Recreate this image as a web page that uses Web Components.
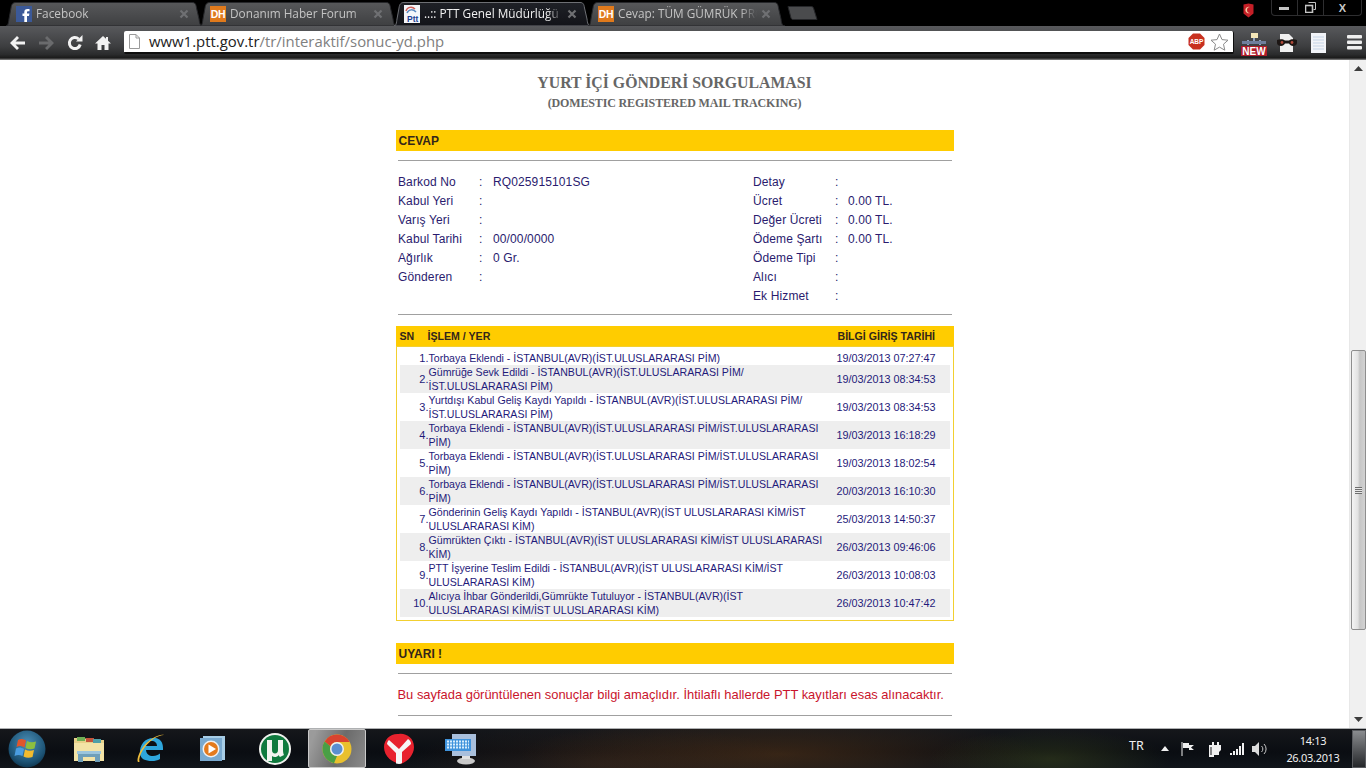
<!DOCTYPE html>
<html lang="tr">
<head>
<meta charset="utf-8">
<title>PTT</title>
<style>
html, body { margin: 0; padding: 0; height: 100%; overflow: hidden; background: #000; }
</style>
</head>
<body>
<browser-desktop>
  <tab-strip slot="top">
    <browser-tab style="margin-left:6px">
      <svg slot="icon" width="16" height="16" viewBox="0 0 16 16"><rect width="16" height="16" fill="#3b5998"/><path d="M11 16V10h2l.4-2.500H11V6.500c0-.8.3-1.200 1.200-1.200h1.300V3h-2C9.400 3 8.300 4.200 8.300 6.200V7.500H6.500V10h1.800v6z" fill="#fff"/></svg>
      Facebook
    </browser-tab>
    <browser-tab>
      <fav-dh slot="icon"></fav-dh>
      Donanım Haber Forum
    </browser-tab>
    <browser-tab active>
      <svg slot="icon" width="16" height="18" viewBox="0 0 16 18"><rect width="16" height="18" fill="#f4f6fa"/><path d="M2 6C3 2 8 1 11 4" fill="none" stroke="#d0605a" stroke-width="1.500"/><path d="M3 8C5 4 9 4 12 7" fill="none" stroke="#5a8ac0" stroke-width="1.500"/><text x="3" y="17" font-family="Liberation Sans" font-size="8.500" font-weight="700" fill="#1c3f94">Ptt</text></svg>
      ..:: PTT Genel Müdürlüğü :
    </browser-tab>
    <browser-tab>
      <fav-dh slot="icon"></fav-dh>
      Cevap: TÜM GÜMRÜK PROSEDÜRÜ
    </browser-tab>
    <new-tab-button></new-tab-button>
    <window-controls></window-controls>
  </tab-strip>

  <browser-toolbar slot="top"></browser-toolbar>

  <ptt-page slot="page">
    <section-bar>CEVAP</section-bar>
    <page-rule></page-rule>
    <info-panel></info-panel>
    <page-rule></page-rule>
    <track-table>
      <track-row no="1" date="19/03/2013 07:27:47">Torbaya Eklendi - İSTANBUL(AVR)(İST.ULUSLARARASI PİM)</track-row>
      <track-row no="2" date="19/03/2013 08:34:53">Gümrüğe Sevk Edildi - İSTANBUL(AVR)(İST.ULUSLARARASI PİM/<br>İST.ULUSLARARASI PİM)</track-row>
      <track-row no="3" date="19/03/2013 08:34:53">Yurtdışı Kabul Geliş Kaydı Yapıldı - İSTANBUL(AVR)(İST.ULUSLARARASI PİM/<br>İST.ULUSLARARASI PİM)</track-row>
      <track-row no="4" date="19/03/2013 16:18:29">Torbaya Eklendi - İSTANBUL(AVR)(İST.ULUSLARARASI PİM/İST.ULUSLARARASI<br>PİM)</track-row>
      <track-row no="5" date="19/03/2013 18:02:54">Torbaya Eklendi - İSTANBUL(AVR)(İST.ULUSLARARASI PİM/İST.ULUSLARARASI<br>PİM)</track-row>
      <track-row no="6" date="20/03/2013 16:10:30">Torbaya Eklendi - İSTANBUL(AVR)(İST.ULUSLARARASI PİM/İST.ULUSLARARASI<br>PİM)</track-row>
      <track-row no="7" date="25/03/2013 14:50:37">Gönderinin Geliş Kaydı Yapıldı - İSTANBUL(AVR)(İST ULUSLARARASI KİM/İST<br>ULUSLARARASI KİM)</track-row>
      <track-row no="8" date="26/03/2013 09:46:06">Gümrükten Çıktı - İSTANBUL(AVR)(İST ULUSLARARASI KİM/İST ULUSLARARASI<br>KİM)</track-row>
      <track-row no="9" date="26/03/2013 10:08:03">PTT İşyerine Teslim Edildi - İSTANBUL(AVR)(İST ULUSLARARASI KİM/İST<br>ULUSLARARASI KİM)</track-row>
      <track-row no="10" date="26/03/2013 10:47:42">Alıcıya İhbar Gönderildi,Gümrükte Tutuluyor - İSTANBUL(AVR)(İST<br>ULUSLARARASI KİM/İST ULUSLARARASI KİM)</track-row>
    </track-table>
    <section-bar style="margin-top:22px">UYARI !</section-bar>
    <page-rule></page-rule>
    <warning-text>Bu sayfada görüntülenen sonuçlar bilgi amaçlıdır. İhtilaflı hallerde PTT kayıtları esas alınacaktır.</warning-text>
    <page-rule></page-rule>
  </ptt-page>

  <page-scrollbar slot="scroll"></page-scrollbar>
  <win-taskbar slot="bottom"></win-taskbar>
</browser-desktop>

<script>
// small helper, every element here is just static markup in an open shadow root
function define(name, markup) {
  customElements.define(name, class extends HTMLElement {
    constructor() {
      super();
      this.attachShadow({ mode: 'open' });
    }
    connectedCallback() {
      this.shadowRoot.innerHTML = typeof markup === 'function' ? markup(this) : markup;
    }
  });
}

define('browser-desktop', `
<style>
:host { display: flex; flex-direction: column; width: 1366px; height: 768px; overflow: hidden; background: #fff; }
.middle { display: flex; height: 668px; overflow: hidden; }
.page { flex: 1; min-width: 0; background: #fff; overflow: hidden; }
</style>
<slot name="top"></slot>
<div class="middle">
  <div class="page"><slot name="page"></slot></div>
  <slot name="scroll"></slot>
</div>
<slot name="bottom"></slot>
`);

define('tab-strip', `
<style>
:host { display: flex; align-items: flex-end; height: 26px; background: #000; position: relative; }
</style>
<slot></slot>
`);

define('browser-tab', el => {
  const active = el.hasAttribute('active');
  const fill = active ? 'url(#act)' : 'url(#ina)';
  const stroke = active ? '#6d6f74' : '#26272a';
  return `
<style>
:host { display: flex; align-items: center; flex: none; box-sizing: border-box; width: 197px; height: 24px; margin-right: -3px; padding: 0 14px 0 10px; position: relative;
  font: 11.800px "Open Sans", "Noto Sans", sans-serif; color: ${active ? '#f2f2f2' : '#c4c4c4'}; }
.shape { position: absolute; left: 0; top: 0; width: 100%; height: 100%; z-index: 0; }
.icon { position: relative; flex: none; width: 16px; height: 16px; margin-right: 4px; display: flex; align-items: center; }
.label { position: relative; flex: 1; min-width: 0; white-space: nowrap; overflow: hidden; margin-bottom: 2px;
  -webkit-mask-image: linear-gradient(90deg, #000 88%, transparent); mask-image: linear-gradient(90deg, #000 88%, transparent); }
.close { position: relative; flex: none; margin-left: 4px; }
</style>
<svg class="shape" viewBox="0 0 197 24" preserveAspectRatio="none">
  <defs>
    <linearGradient id="ina" x1="0" y1="0" x2="0" y2="1"><stop offset="0" stop-color="#57585a"/><stop offset="1" stop-color="#3e3f41"/></linearGradient>
    <linearGradient id="act" x1="0" y1="0" x2="0" y2="1"><stop offset="0" stop-color="#1f2127"/><stop offset="1" stop-color="#121318"/></linearGradient>
  </defs>
  <path d="M0 24C2 24 2.500 21 3 17L5 6C5.500 2 7 .5 10 .5H186C189 .5 190 2 190.500 6L193 17C193.500 21 194 24 197 24Z" fill="${fill}" stroke="${stroke}"/>
</svg>
<span class="icon"><slot name="icon"></slot></span>
<span class="label"><slot></slot></span>
<svg class="close" width="10" height="10" viewBox="0 0 10 10"><path d="M1.500 1.500l7 7M8.500 1.500l-7 7" stroke="#6f7073" stroke-width="2.200"/></svg>
`;
});

define('fav-dh', `
<style>
:host { display: block; width: 16px; height: 16px; background: #e07a1c; color: #fff; font: 700 10.500px/16px "Liberation Sans", sans-serif; text-align: center; letter-spacing: -.3px; }
</style>
DH
`);

define('new-tab-button', `
<style>
:host { display: block; flex: none; margin: 0 0 6px 5px; height: 14px; }
</style>
<svg width="31" height="14" viewBox="0 0 31 14"><path d="M1 .5H24C25.500 .5 26 1 26.500 2L30 13.500H6C5 13.500 4.500 13 4 12Z" fill="#4a4b4d" stroke="#26272a"/></svg>
`);

define('window-controls', `
<style>
:host { display: flex; flex: none; align-items: flex-start; gap: 16px; margin-left: auto; align-self: flex-start; padding-right: 4px; }
.flag { margin-top: 3px; }
.box { display: flex; width: 91px; height: 16px; box-sizing: border-box; border: 1px solid #2e2e30; border-top: 0; border-radius: 0 0 4px 4px; }
.box span { display: flex; align-items: center; justify-content: center; height: 100%; border-right: 1px solid #2e2e30; }
.box span:last-child { border-right: 0; }
.x { color: #c9c9c9; font: 700 11px "Liberation Sans", sans-serif; }
</style>
<svg class="flag" width="13" height="15" viewBox="0 0 12 15"><path d="M1 1.500L6 .5l5 1v9L6 14.500 1 10.500z" fill="#c51f27"/><path d="M7.500 4A3.300 3.300 0 1 0 7.500 10 2.700 2.700 0 1 1 7.500 4z" fill="#f4c9a0"/></svg>
<div class="box">
  <span style="width:25px"><svg width="11" height="4"><rect width="10" height="3" y="1" fill="#c4c4c4"/></svg></span>
  <span style="width:25px"><svg width="11" height="11" viewBox="0 0 11 11"><path d="M3.500 .5h7v7h-2" fill="none" stroke="#c4c4c4"/><rect x=".5" y="3.500" width="7" height="7" fill="none" stroke="#c4c4c4" stroke-width="1.600"/></svg></span>
  <span class="x" style="flex:1">X</span>
</div>
`);

define('browser-toolbar', `
<style>
:host { display: flex; align-items: flex-start; height: 34px; box-sizing: border-box; padding: 5px 0 0 9px; background: linear-gradient(#58595c, #3d3e40 60%, #2a2b2c 84%, #1a1a1a 94%, #8b8b8b); }
.nav { display: flex; align-items: center; height: 23px; gap: 12px; }
.url { display: flex; align-items: center; flex: none; width: 1110px; height: 23px; margin-left: 13px; box-sizing: border-box; padding: 0 4px 0 4px; background: #fff; border-radius: 2px; border: 1px solid #0e0e0e; border-width: 0 1px 2px 0; }
.addr { flex: 1; margin: 0 0 2px 9px; font: 14.900px "Open Sans", "Noto Sans", sans-serif; color: #808080; white-space: nowrap; }
.addr b { font-weight: 400; color: #222; }
.tools { display: flex; align-items: center; height: 23px; margin-left: 6px; }
</style>
<div class="nav">
  <svg width="17" height="16" viewBox="0 0 17 16"><path d="M8 1L1 8l7 7 2-2-3.500-3.500H16v-3H6.500L10 3z" fill="#f2f2f2"/></svg>
  <svg width="17" height="16" viewBox="0 0 17 16"><path d="M9 1l7 7-7 7-2-2 3.500-3.500H1v-3h9.500L7 3z" fill="#6a6b6d"/></svg>
  <svg width="16" height="16" viewBox="0 0 16 16"><path d="M13.200 9.500A5.500 5.500 0 1 1 11.600 4" fill="none" stroke="#f2f2f2" stroke-width="3"/><path d="M9 6.500H15.500V0z" fill="#f2f2f2"/></svg>
  <svg width="16" height="16" viewBox="0 0 16 16"><path d="M8 1L0 8.500h2.500V15H6.500V10h3v5h4V8.500H16L13 5.700V2h-2v1.800z" fill="#f2f2f2"/></svg>
</div>
<div class="url">
  <svg width="12" height="15" viewBox="0 0 12 15"><path d="M1.500 .5H8l3.500 3.500v10.500h-10z" fill="#fff" stroke="#9a9a9a"/><path d="M8 .5V4h3.500" fill="none" stroke="#9a9a9a"/></svg>
  <span class="addr"><b>www1.ptt.gov.tr</b>/tr/interaktif/sonuc-yd.php</span>
  <svg width="17" height="17" viewBox="0 0 17 17" style="margin-right:5px"><path d="M5 .5H12L16.500 5V12L12 16.500H5L.5 12V5Z" fill="#c8301f"/><text x="8.500" y="11" text-anchor="middle" font-family="Liberation Sans" font-size="6.500" font-weight="700" fill="#fff">ABP</text></svg>
  <svg width="19" height="18" viewBox="0 0 19 18"><path d="M9.500 1l2.500 5.600 6 .6-4.500 4 1.300 6-5.300-3.100-5.300 3.100 1.300-6L1 7.200l6-.6z" fill="#fff" stroke="#8a8a8a"/></svg>
</div>
<div class="tools">
  <svg width="28" height="26" viewBox="0 0 28 26" style="margin-top:2px">
    <rect x="11" y="2" width="7" height="5" fill="#f4e6b8"/>
    <path d="M14 7v3M4 11h20M8 9v5M20 9v5" stroke="#8fa2bf" stroke-width="2"/>
    <rect x="2" y="10" width="24" height="3" fill="#6f7f9c"/>
    <rect x="1" y="15" width="26" height="10" fill="#b01c2a"/>
    <text x="14" y="24" text-anchor="middle" font-family="Liberation Sans" font-size="10" font-weight="700" fill="#fff">NEW</text>
  </svg>
  <svg width="20" height="20" viewBox="0 0 20 20" style="margin-left:9px"><path d="M3 1h9l4 4v14H3z" fill="#f0f0f0"/><path d="M0 7c3-1 6-1 8 .5h4C14 6 17 6 20 7v3c0 2-2 3-4 3-2 0-3-1-4-2.500H8C7 12 6 13 4 13c-2 0-4-1-4-3z" fill="#1c1614"/><circle cx="5" cy="9.500" r="1.400" fill="#b04a3a"/><circle cx="15" cy="9.500" r="1.400" fill="#b04a3a"/></svg>
  <svg width="15" height="20" viewBox="0 0 15 20" style="margin-left:14px"><rect width="15" height="20" fill="#f2f4f8"/><path d="M2 4h11M2 7h11M2 10h11M2 13h11M2 16h11" stroke="#c4d3e6"/></svg>
  <svg width="15" height="15" viewBox="0 0 15 15" style="margin-left:21px"><rect width="15" height="3.600" rx="1" fill="#efefef"/><rect y="5.500" width="15" height="3.600" rx="1" fill="#efefef"/><rect y="11" width="15" height="3.600" rx="1" fill="#efefef"/></svg>
</div>
`);

define('ptt-page', `
<style>
:host { display: block; width: 558px; margin: 0 auto; padding-top: 14px; font-family: "Liberation Sans", Arial, sans-serif; }
.head { text-align: center; font-family: "Liberation Serif", serif; font-weight: 700; color: #666; height: 56px; }
.t1 { font-size: 15.800px; line-height: 18px; }
.t2 { font-size: 12px; line-height: 15px; margin-top: 4px; letter-spacing: -.15px; }
</style>
<div class="head">
  <div class="t1">YURT İÇİ GÖNDERİ SORGULAMASI</div>
  <div class="t2">(DOMESTIC REGISTERED MAIL TRACKING)</div>
</div>
<slot></slot>
`);

define('section-bar', `
<style>
:host { display: block; height: 21px; padding-left: 3px; background: #fc0; color: #33261a; font: 700 12px/22px "Liberation Sans", sans-serif; }
</style>
<slot></slot>
`);

define('page-rule', `
<style>
:host { display: block; height: 1px; margin: 9px 2px 0; background: #a0a0a0; }
</style>
`);

const infoLeft = [['Barkod No', 'RQ025915101SG'], ['Kabul Yeri', ''], ['Varış Yeri', ''], ['Kabul Tarihi', '00/00/0000'], ['Ağırlık', '0 Gr.'], ['Gönderen', '']];
const infoRight = [['Detay', ''], ['Ücret', '0.00 TL.'], ['Değer Ücreti', '0.00 TL.'], ['Ödeme Şartı', '0.00 TL.'], ['Ödeme Tipi', ''], ['Alıcı', ''], ['Ek Hizmet', '']];
const infoRows = rows => rows.map(([k, v]) => `<span>${k}</span><span>:</span><span>${v}</span>`).join('');

define('info-panel', `
<style>
:host { display: flex; height: 145px; padding: 12px 0 0 2.500px; box-sizing: border-box; margin-bottom: -1px; font: 12px/19px "Liberation Sans", sans-serif; color: #2a1b6e; letter-spacing: .12px; }
.col { display: grid; grid-auto-rows: 19px; align-content: start; }
.a { width: 355px; grid-template-columns: 81px 14px 1fr; }
.b { grid-template-columns: 82px 13px 1fr; }
</style>
<div class="col a">${infoRows(infoLeft)}</div>
<div class="col b">${infoRows(infoRight)}</div>
`);

define('track-table', `
<style>
:host { display: block; margin-top: 11px; font-family: "Liberation Sans", sans-serif; }
.head { display: grid; grid-template-columns: 28px 410px 1fr; height: 20px; padding-left: 4px; background: #fc0; color: #33261a; font: 700 10.600px/21px "Liberation Sans", sans-serif; }
.body { border: 1px solid #f2cf30; padding: 2px 3px 3px; }
</style>
<div class="head"><span>SN</span><span>İŞLEM / YER</span><span>BİLGİ GİRİŞ TARİHİ</span></div>
<div class="body"><slot></slot></div>
`);

define('track-row', el => `
<style>
:host { display: grid; grid-template-columns: 29px 408px 1fr; align-items: center; min-height: 16px; color: #1f1a7a; font: 10.600px/14px "Liberation Sans", sans-serif; }
:host(:nth-child(even)) { background: #eeeeee; }
:host(:first-child) span { margin: 1px 0 -1px; }
.no { text-align: right; font-size: 11px; }
.date { font-size: 10.800px; }
</style>
<span class="no">${el.getAttribute('no')}.</span>
<span><slot></slot></span>
<span class="date">${el.getAttribute('date')}</span>
`);

define('warning-text', `
<style>
:host { display: block; margin: 12px 2px; color: #c9142c; font: 12.930px/17px "Liberation Sans", sans-serif; white-space: nowrap; }
</style>
<slot></slot>
`);

define('page-scrollbar', `
<style>
:host { display: flex; flex-direction: column; align-items: center; flex: none; width: 17px; height: 668px; box-sizing: border-box; background: #f0f0f0; border-left: 1px solid #e8e8e8; }
.arrow { flex: none; height: 17px; display: flex; align-items: center; justify-content: center; }
.gap1 { flex: none; height: 273px; }
.thumb { flex: none; width: 15px; height: 280px; box-sizing: border-box; border: 1px solid #8e8e8e; border-radius: 2px; display: flex; align-items: center; justify-content: center;
  background: linear-gradient(90deg, #f4f4f4, #e2e2e2 45%, #c6c6c6 60%, #d2d2d2); }
.grip { width: 7px; height: 7px; background: repeating-linear-gradient(#6e6e6e 0 1px, #e8e8e8 1px 2px); }
.gap2 { flex: 1; }
</style>
<div class="arrow"><svg width="9" height="5"><path d="M0 5L4.500 0 9 5z" fill="#3c3c3c"/></svg></div>
<div class="gap1"></div>
<div class="thumb"><div class="grip"></div></div>
<div class="gap2"></div>
<div class="arrow"><svg width="9" height="5"><path d="M0 0L4.500 5 9 0z" fill="#3c3c3c"/></svg></div>
`);

define('win-taskbar', `
<style>
:host { display: flex; align-items: stretch; height: 40px; box-sizing: border-box; border-top: 1px solid #aeb0b2; color: #f0f0f0;
  background:
    radial-gradient(120px 30px at 1050px 30px, rgba(60,70,30,.5), transparent),
    radial-gradient(260px 40px at 780px 25px, rgba(90,55,25,.55), transparent),
    radial-gradient(200px 40px at 600px 35px, rgba(70,45,30,.4), transparent),
    linear-gradient(#15171b, #0a0d12 60%, #11151a); font-family: "Noto Sans", "Open Sans", sans-serif; }
.apps { display: flex; align-items: center; }
.slot { position: relative; display: flex; align-items: center; justify-content: center; flex: none; height: 39px; }
.on { box-sizing: border-box; width: 58px; border: 1px solid #c9c9c9; border-radius: 2px; background: linear-gradient(110deg, #9b9b9b 10%, #6b6b6b 55%, #8a8a8a); }
.tray { display: flex; align-items: center; margin-left: auto; height: 39px; }
.clock { width: 78px; margin-left: 6px; text-align: center; font-size: 11px; letter-spacing: -.3px; line-height: 17px; padding-top: 1px; }
.desk { width: 14px; height: 38px; box-sizing: border-box; border: 1px solid #5a5c60; background: linear-gradient(#8a8c8f, #25272a); }
</style>
<div class="apps">
  <span class="slot" style="width:54px">
    <svg width="38" height="38" viewBox="0 0 38 38">
      <defs><radialGradient id="orb" cx=".5" cy=".35" r=".7"><stop offset="0" stop-color="#4c90b8"/><stop offset=".7" stop-color="#1d5476"/><stop offset="1" stop-color="#0b3048"/></radialGradient></defs>
      <circle cx="19" cy="19" r="18.500" fill="url(#orb)"/>
      <path d="M10 10c3-1.500 5-1 8 .5l-1.500 7c-3-1.500-5-2-8-.5z" fill="#e0562c"/>
      <path d="M19 11c3 1.500 6 1.500 9 .5l-1.500 7c-3 1-6 1-9-.5z" fill="#8cbf3f"/>
      <path d="M8 18.500c3-1.500 5-1 8 .5L14.500 26c-3-1.500-5-1.500-8 0z" fill="#4a9de0"/>
      <path d="M17 19.500c3 1.500 6 1.500 9 .5L24.500 27c-3 1-6 1-9-.5z" fill="#f2bb2e"/>
    </svg>
  </span>
  <span class="slot" style="width:70px">
    <svg width="32" height="27" viewBox="0 0 32 27">
      <path d="M1 3h11l2 2h17v21H1z" fill="#e8d189"/>
      <rect x="4" y="2" width="8" height="4" fill="#6fae55"/><rect x="13" y="3" width="8" height="4" fill="#c5533a"/><rect x="20" y="4" width="8" height="4" fill="#4fa0a8"/>
      <path d="M1 8h30v18H1z" fill="#f3e3a6"/>
      <path d="M5 27V18h22v9h-5v-5H10v5z" fill="#6f9fb9"/>
      <rect x="4" y="16" width="24" height="3" fill="#9cc5dc"/>
    </svg>
  </span>
  <span class="slot" style="width:54px">
    <svg width="32" height="32" viewBox="0 0 32 32">
      <path d="M5 21C4 11 11 4 20 5c5 .5 8 4 8 10v2H11c.5 4 3 6 7 6 3 0 5-1 7-2.500V26c-2.500 1.500-5 2-8 2C10 28 6 26 5 21zM11 13h11c0-3-2-5-5.500-5S11 10 11 13z" fill="#2ea6dc"/>
      <path d="M3 29C1 26 6 12 18 5c4-2.500 9-4 11-3-2-.2-6 1-10 3.500C9 12 3 24 4.500 29z" fill="#efbe3c"/>
    </svg>
  </span>
  <span class="slot" style="width:68px">
    <svg width="27" height="27" viewBox="0 0 27 27">
      <rect x="4" y="1" width="22" height="24" fill="#a7cde6"/><rect x="1" y="3" width="22" height="23" fill="#79a9cf"/>
      <circle cx="12" cy="14" r="8.500" fill="#f0f0f0"/><circle cx="12" cy="14" r="7" fill="#e47a1c"/>
      <path d="M9.500 9.500L17 14l-7.500 4.500z" fill="#fff"/>
    </svg>
  </span>
  <span class="slot" style="width:58px;margin-right:4px">
    <svg width="32" height="32" viewBox="0 0 32 32">
      <circle cx="16" cy="16" r="16" fill="#f2f4f0"/><circle cx="16" cy="16" r="14" fill="#0f7a3e"/>
      <path d="M8 7h5v10c0 2 1 3.500 3 3.500s3-1.500 3-3.500V7h5v10c0 2.500.5 4 1 5l-4 2c-.8-.8-1-1.500-1.200-2-1 1.500-2.500 2-4 2-1 0-2-.3-2.800-1v5H8z" fill="#f2f4f0"/>
    </svg>
  </span>
  <span class="slot on">
    <svg width="30" height="30" viewBox="0 0 30 30">
      <circle cx="15" cy="15" r="14.500" fill="#e9c02e"/>
      <path d="M15 .5A14.500 14.500 0 0 1 27.600 8H15a7 7 0 0 0-6.500 4.500L2.600 7.500A14.500 14.500 0 0 1 15 .5z" fill="#d8432f"/>
      <path d="M2.600 7.500l6 5A7 7 0 0 0 15 22l-3 7.200A14.500 14.500 0 0 1 2.600 7.500z" fill="#4a9f46"/>
      <circle cx="15" cy="15" r="7" fill="#eef1f4"/><circle cx="15" cy="15" r="5.500" fill="#5a8fd0"/>
    </svg>
  </span>
  <span class="slot" style="width:66px">
    <svg width="30" height="32" viewBox="0 0 30 32">
      <path d="M15 1C22 0 30 5 30 14c0 8-6 14-13 17C9 30 0 24 0 14 0 6 7 0 15 1z" fill="#e8222e"/>
      <path d="M5 7l10 9 9-10c2 1 3 3 3 5l-9 8 0 11c-1 .5-2 1-3 1-1 0-2-.2-3-.5V20L3 11c0-1.500 1-3 2-4z" fill="#f6f6f6"/>
    </svg>
  </span>
  <span class="slot" style="width:56px">
    <svg width="32" height="33" viewBox="0 0 32 33">
      <path d="M8 2H32V24H8z" fill="#a9bfdc"/>
      <path d="M1 7H27V19H1z" fill="#3f93dc"/>
      <path d="M3 9.500h22M3 12.500h22M3 15.500h22" stroke="#d8eefc" stroke-width="2" stroke-dasharray="2 1"/>
      <ellipse cx="22" cy="29" rx="9" ry="3.500" fill="#c9c9c9"/>
      <path d="M18 24h8v3h-8z" fill="#e0e0e0"/>
    </svg>
  </span>
</div>
<div class="tray">
  <span style="font-size:12.500px;width:32px;margin-bottom:6px">TR</span>
  <span style="display:flex;gap:0;align-items:center">
    <svg width="8" height="5" style="margin-right:12px"><path d="M0 5L4 0 8 5z" fill="#f0f0f0"/></svg>
    <svg width="14" height="14" viewBox="0 0 14 14" style="margin-right:13px"><path d="M1 0v14" stroke="#f0f0f0"/><path d="M2 1h6v2h5L10 5.500 13 8H8V6H2z" fill="#f0f0f0"/></svg>
    <svg width="14" height="16" viewBox="0 0 14 16" style="margin-right:8px"><path d="M2 4h2V1h2v3h3V1h2v3h2v5l-2 2v3H6v2H1V4z" fill="#f0f0f0"/><path d="M3 6v8" stroke="#15171b"/></svg>
    <svg width="15" height="12" viewBox="0 0 15 12" style="margin-right:7px"><rect y="10" width="2" height="2" fill="#f0f0f0"/><rect x="3" y="8" width="2" height="4" fill="#f0f0f0"/><rect x="6" y="6" width="2" height="6" fill="#f0f0f0"/><rect x="9" y="3" width="2" height="9" fill="#f0f0f0"/><rect x="12" y="0" width="2" height="12" fill="#f0f0f0"/></svg>
    <svg width="16" height="14" viewBox="0 0 16 14"><path d="M0 4h3l4-4v14l-4-4H0z" fill="#dcdcdc"/><path d="M9.500 4a4 4 0 0 1 0 6M12 2a7 7 0 0 1 0 10" fill="none" stroke="#c8c8c8"/></svg>
  </span>
  <div class="clock"><div>14:13</div><div>26.03.2013</div></div>
  <div class="desk"></div>
</div>
`);
</script>
</body>
</html>
